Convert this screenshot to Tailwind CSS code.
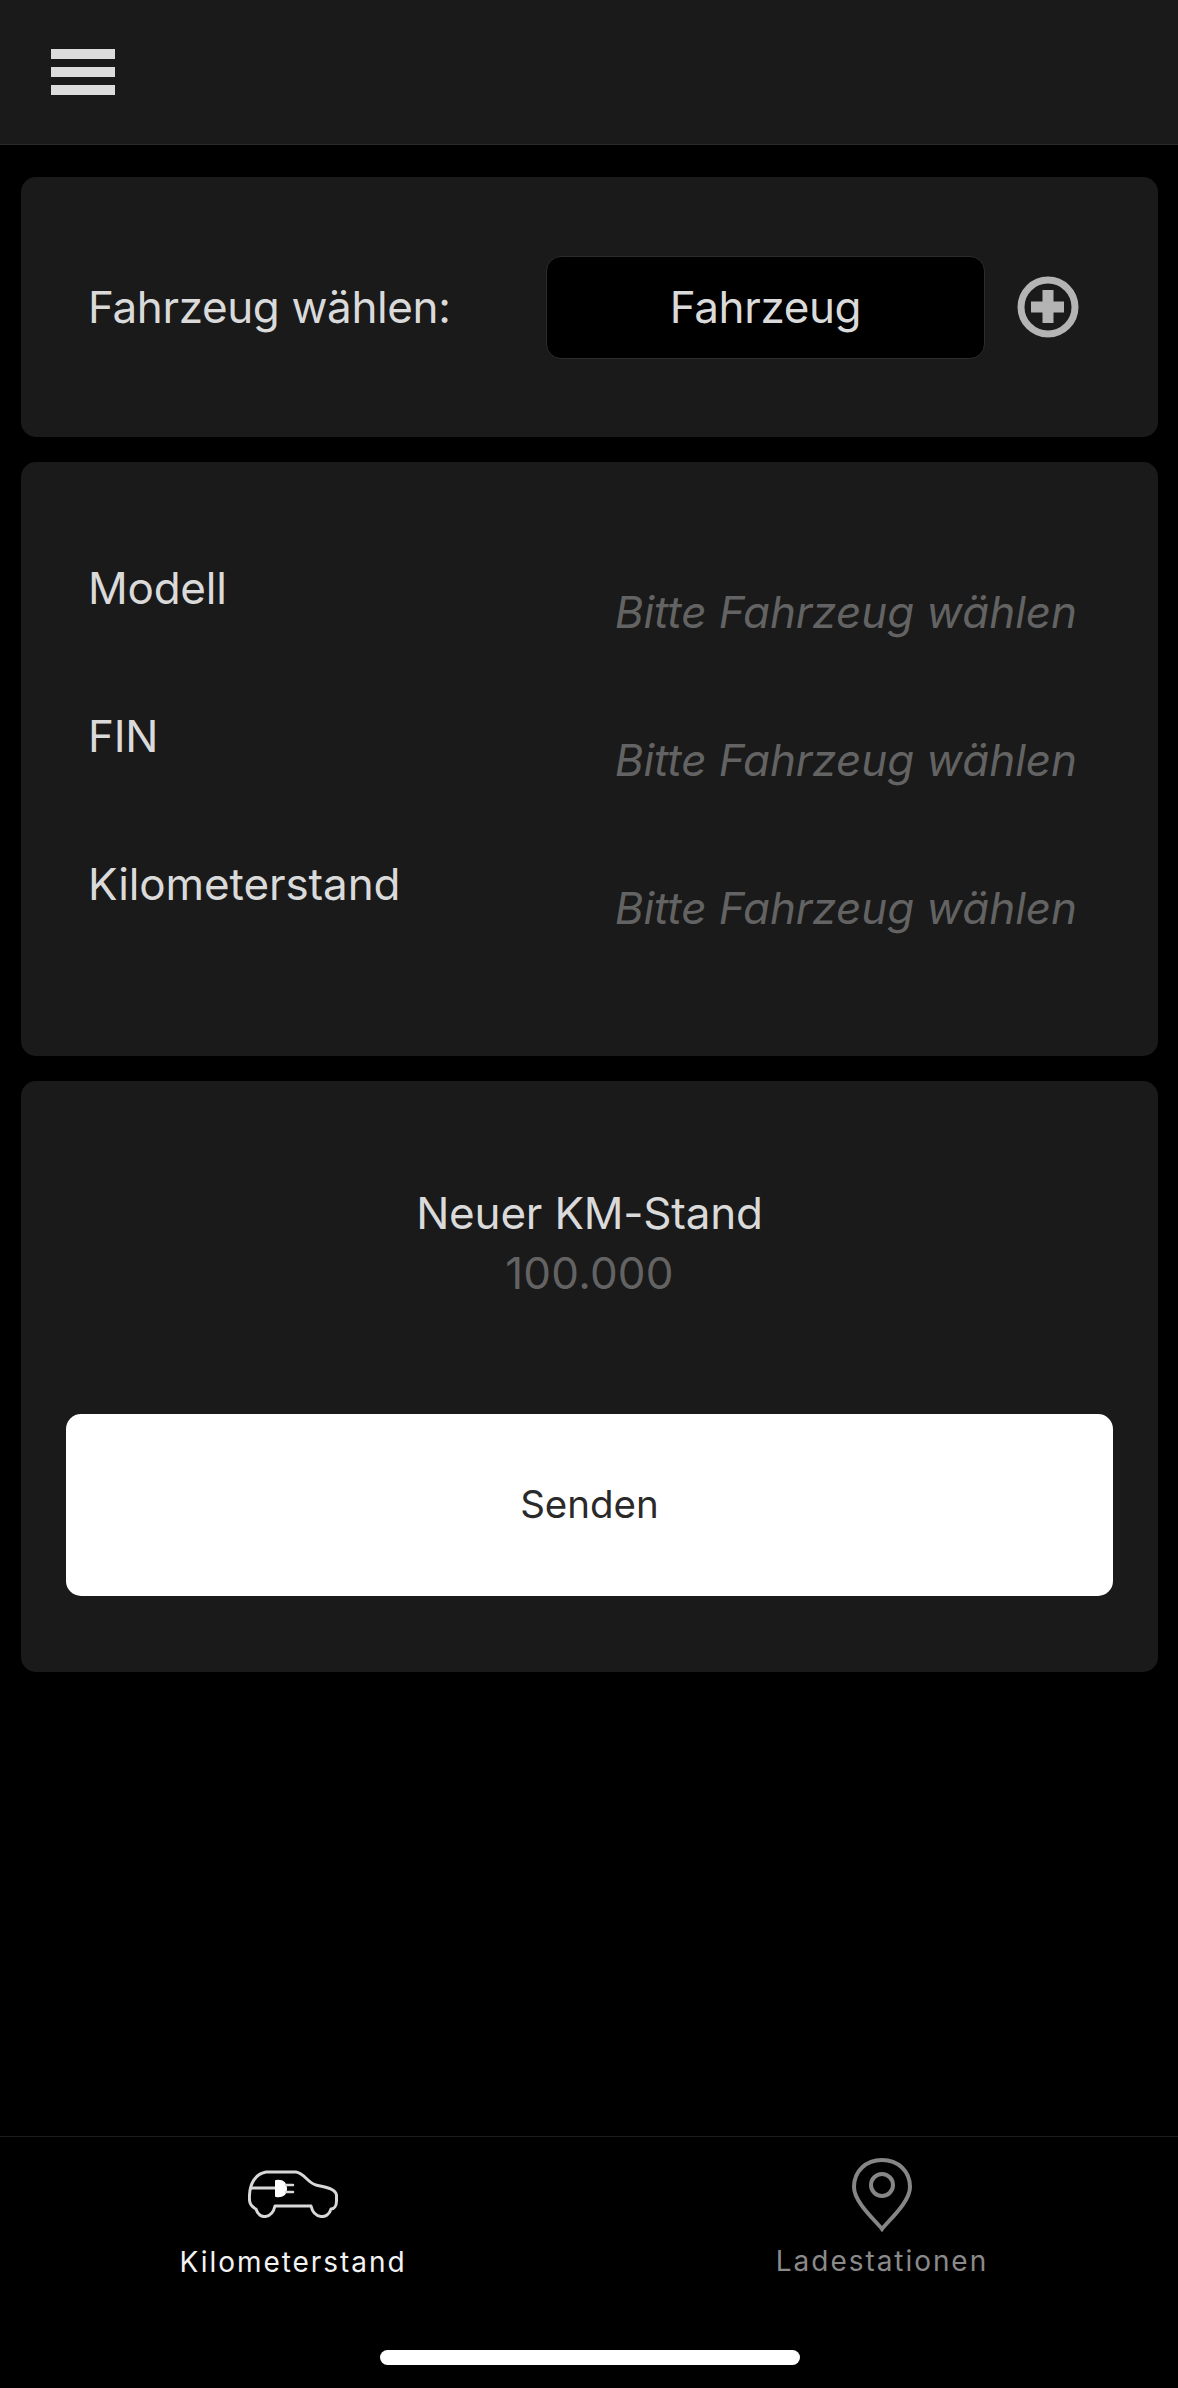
<!DOCTYPE html>
<html><head><meta charset="utf-8"><script src="https://cdn.jsdelivr.net/npm/@tailwindcss/browser@4"></script></head>
<body class="m-0 bg-black">
<div class="w-[1178px] h-[2388px] bg-black flex flex-col font-['Inter',sans-serif] text-[#dadada] overflow-hidden">
  <header class="h-[145px] shrink-0 bg-[#1a1a1a] border-b border-[#2a2a2a] pl-[51px] pt-[49px]">
    <div class="w-[64px] flex flex-col gap-[8px]">
      <div class="h-[10px] bg-[#dcdcdc]"></div><div class="h-[10px] bg-[#dcdcdc]"></div><div class="h-[10px] bg-[#dcdcdc]"></div>
    </div>
  </header>
  <main class="flex flex-col gap-[25px] pl-[21px] pr-[20px] pt-[32px]">
    <section class="h-[260px] rounded-[15px] bg-[#1a1a1a] flex items-center pl-[67px]">
      <span class="w-[458px] text-[44px] leading-[52px] tracking-[-0.38px]">Fahrzeug wählen:</span>
      <div class="w-[439px] h-[103px] rounded-[15px] bg-black border border-[#2c2c2c] flex items-center justify-center text-[44px] tracking-[-0.38px]">Fahrzeug</div>
      <svg class="ml-[32px]" width="62" height="62" viewBox="0 0 62 62"><circle cx="31" cy="31" r="27" fill="none" stroke="#b4b4b4" stroke-width="7"/><rect x="14" y="25.500" width="33" height="11" fill="#b4b4b4"/><rect x="25.500" y="14" width="11" height="33" fill="#b4b4b4"/></svg>
    </section>
    <section class="h-[594px] rounded-[15px] bg-[#1a1a1a] pl-[67px] pr-[81px] pt-[100px] flex flex-col gap-[96px]">
      <div class="flex justify-between h-[52px]"><span class="text-[44px] leading-[52px] tracking-[-0.25px]">Modell</span><span class="text-[44px] leading-[52px] italic tracking-[-0.07px] text-[#636363] translate-y-[24px]">Bitte Fahrzeug wählen</span></div>
      <div class="flex justify-between h-[52px]"><span class="text-[44px] leading-[52px] tracking-[-0.25px]">FIN</span><span class="text-[44px] leading-[52px] italic tracking-[-0.07px] text-[#636363] translate-y-[24px]">Bitte Fahrzeug wählen</span></div>
      <div class="flex justify-between h-[52px]"><span class="text-[44px] leading-[52px] tracking-[-0.1px]">Kilometerstand</span><span class="text-[44px] leading-[52px] italic tracking-[-0.07px] text-[#636363] translate-y-[24px]">Bitte Fahrzeug wählen</span></div>
    </section>
    <section class="h-[591px] rounded-[15px] bg-[#1a1a1a] px-[45px] pt-[102px] flex flex-col items-center">
      <div class="text-[44px] leading-[60px] tracking-[-0.2px]">Neuer KM-Stand</div>
      <div class="text-[44px] leading-[60px] tracking-[0.2px] text-[#636363]">100.000</div>
      <button class="mt-[111px] w-full h-[182px] rounded-[15px] bg-white text-[#2a2a2a] text-[38.500px]">Senden</button>
    </section>
  </main>
  <nav class="mt-auto h-[252px] shrink-0 border-t border-[#1c1c1c] relative flex">
    <div class="w-[586px] flex flex-col items-center pt-[33px]">
      <svg width="90" height="48" viewBox="0 0 90 48" fill="none" stroke="#d8d8d8" stroke-width="3" stroke-linejoin="round" stroke-linecap="round"><path d="M8 39C2 36 1 32 1.500 25C2 14 7 4 18 2H48C56 3 60 13 68 15C76 17 87 18 88.500 25V31C88.500 36 86 39 83 39C80 50 66 49 63 36H27C24 49 11 50 8 39Z"/><path d="M3 18H27"/><path d="M28 11C36 10 38 14 38 18.500C38 24 35 27 28 26Z" fill="#fff" stroke="#fff" stroke-width="2"/><path d="M38 15H45M38 22H45" stroke-width="2.500"/></svg>
      <div class="mt-[27px] text-[28px] leading-[34px] tracking-[1.95px] text-[#f2f2f2]">Kilometerstand</div>
    </div>
    <div class="flex-1 flex flex-col items-center pt-[20px]">
      <svg width="62" height="76" viewBox="0 0 62 76" fill="none" stroke="#868686" stroke-width="4"><path d="M31 72C24 63 3 45 3 30C3 14 15 3 31 3C47 3 59 14 59 30C59 45 38 63 31 72Z"/><circle cx="31" cy="28" r="11"/></svg>
      <div class="mt-[11px] text-[28px] leading-[34px] tracking-[1.95px] text-[#8a8a8a]">Ladestationen</div>
    </div>
    <div class="absolute left-[380px] bottom-[23px] w-[420px] h-[15px] rounded-full bg-white"></div>
  </nav>
</div>
</body></html>
